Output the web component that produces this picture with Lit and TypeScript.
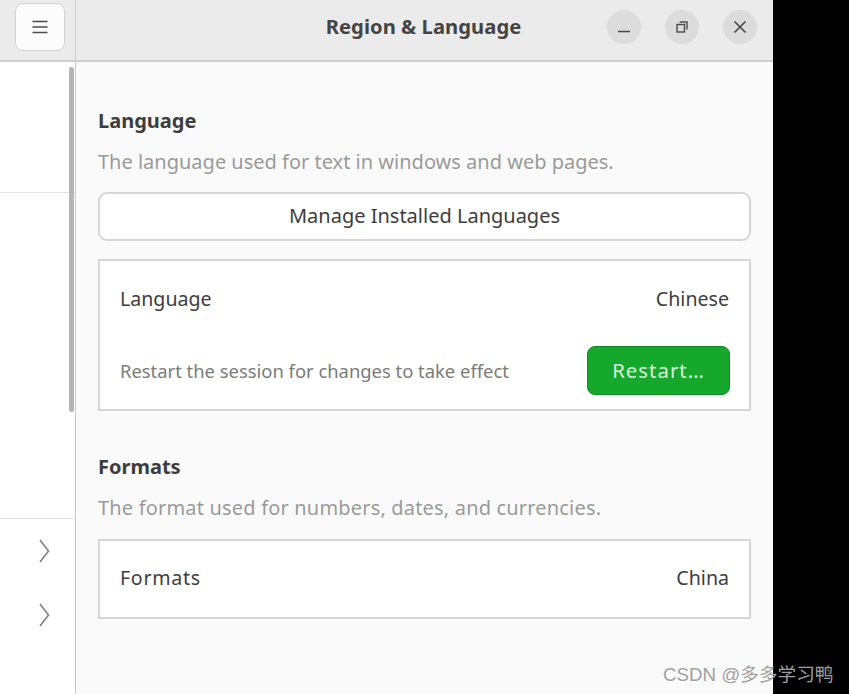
import { LitElement, html, css } from "lit";
import { customElement } from "lit/decorators.js";

@customElement("app-root")
export class AppRoot extends LitElement {
  static styles = css`
    :host { display: block; width: 849px; height: 694px; background: #000; position: relative; overflow: hidden; font-family: "Noto Sans", "Open Sans", sans-serif; color: #3d3d3d; }
    .window { width: 773px; height: 694px; background: #fafafa; display: flex; flex-direction: column; }
    .header { height: 60px; flex: none; background: #ebebeb; border-bottom: 2px solid #cdcdcd; display: flex; }
    .head-left { flex: none; border-right: 1px solid #cdcdcd; display: flex; align-items: center; padding-left: 15px; width: 60px; }
    .menu { width: 50px; height: 48px; box-sizing: border-box; border: 1px solid #d2d2d2; border-radius: 8px; background: #fcfcfc; display: flex; align-items: center; justify-content: center; margin-top: -7px; }
    .head-main { flex: 1; display: flex; align-items: center; position: relative; justify-content: center; padding: 0 2px 8px 0; }
    .title { font-size: 20.2px; font-weight: 700; color: #444; letter-spacing: 0.05px; }
    .controls { position: absolute; right: 16px; top: 10px; display: flex; gap: 24px; }
    .ctl { width: 34px; height: 34px; border-radius: 50%; background: #dcdcdc; display: flex; align-items: center; justify-content: center; }
    .body { flex: 1; display: flex; min-height: 0; }
    .side { width: 75px; flex: none; background: #fff; border-right: 1px solid #c8c8c8; position: relative; }
    .scroll { position: absolute; left: 69px; top: 5px; width: 5px; height: 345px; background: #b4b4b4; border-radius: 3px; }
    .sep { border-top: 1px solid #e4e4e4; }
    .sep1 { margin-top: 130px; }
    .sep2 { margin-top: 325px; }
    .chev { display: flex; padding-left: 39px; height: 64px; align-items: center; }
    .main { flex: 1; padding: 47px 22px 0; box-sizing: border-box; display: flex; flex-direction: column; }
    h2 { margin: 0; font-size: 20px; line-height: 24px; font-weight: 700; color: #3d3d3d; }
    .desc { margin: 16px 0 0; font-size: 20px; line-height: 26px; color: #9a9a9a; }
    .desc.wide { letter-spacing: 0.18px; }
    .btn { margin-top: 17px; height: 49px; box-sizing: border-box; background: #fff; border: 2px solid #d6d6d6; border-radius: 9px; display: flex; align-items: center; justify-content: center; font-size: 20px; color: #3d3d3d; padding-bottom: 2px; }
    .card { background: #fff; border: 2px solid #d6d6d6; box-sizing: border-box; padding: 0 20px; }
    .card.lang { margin-top: 18px; height: 152px; }
    .card.fmt { margin-top: 18px; height: 80px; display: flex; align-items: center; padding-bottom: 4px; }
    .row { display: flex; justify-content: space-between; align-items: center; font-size: 19.6px; color: #3d3d3d; width: 100%; }
    .r1 { height: 74px; }
    .r2 { height: 49px; margin-top: 11px; }
    .label-wide { letter-spacing: 0.7px; }
    .note { font-size: 18.4px; color: #7b7b7b; }
    .restart { width: 143px; height: 49px; margin-right: -1px; box-sizing: border-box; background: #16a72d; border: 1px solid #0f8a24; border-radius: 8px; color: #d6f5dc; font-size: 20.4px; letter-spacing: 1px; display: flex; align-items: center; justify-content: center; padding-bottom: 1px; }
    .formats-h { margin-top: 44px; }
    .mark { position: absolute; left: 663px; top: 661px; font-family: "Liberation Sans", "Noto Sans CJK SC", sans-serif; font-size: 18.7px; line-height: 28px; color: #a0a0a0; white-space: nowrap; }
  `;

  private chevron() {
    return html`<svg width="12" height="26" viewBox="0 0 12 26" fill="none" stroke="#808080" stroke-width="1.6"><path d="M1 2 L9.5 13 L1 24"/></svg>`;
  }

  render() {
    return html`
      <div class="window">
        <div class="header">
          <div class="head-left">
            <div class="menu">
              <svg width="16" height="14" viewBox="0 0 16 14" stroke="#4a4a4a" stroke-width="1.5"><path d="M0.5 1.5H15.5M0.5 7H15.5M0.5 12.5H15.5"/></svg>
            </div>
          </div>
          <div class="head-main">
            <span class="title">Region &amp; Language</span>
            <div class="controls">
              <div class="ctl"><svg width="14" height="14" viewBox="0 0 14 14" stroke="#4a4a4a" stroke-width="1.5"><path d="M1 11.5H13"/></svg></div>
              <div class="ctl"><svg width="14" height="14" viewBox="0 0 14 14" fill="none" stroke="#4a4a4a" stroke-width="1.4"><rect x="2" y="4.5" width="7.5" height="7.5"/><path d="M4.5 2H12V9.5"/></svg></div>
              <div class="ctl"><svg width="14" height="14" viewBox="0 0 14 14" stroke="#4a4a4a" stroke-width="1.7"><path d="M1.5 1.5L12.5 12.5M12.5 1.5L1.5 12.5"/></svg></div>
            </div>
          </div>
        </div>
        <div class="body">
          <div class="side">
            <div class="scroll"></div>
            <div class="sep sep1"></div>
            <div class="sep sep2"></div>
            <div>
              <div class="chev">${this.chevron()}</div>
              <div class="chev">${this.chevron()}</div>
            </div>
          </div>
          <div class="main">
            <h2>Language</h2>
            <p class="desc">The language used for text in windows and web pages.</p>
            <div class="btn">Manage Installed Languages</div>
            <div class="card lang">
              <div class="row r1"><span>Language</span><span>Chinese</span></div>
              <div class="row r2"><span class="note">Restart the session for changes to take effect</span><div class="restart">Restart…</div></div>
            </div>
            <h2 class="formats-h">Formats</h2>
            <p class="desc wide">The format used for numbers, dates, and currencies.</p>
            <div class="card fmt">
              <div class="row"><span class="label-wide">Formats</span><span>China</span></div>
            </div>
          </div>
        </div>
      </div>
      <div class="mark">CSDN @多多学习鸭</div>
    `;
  }
}
